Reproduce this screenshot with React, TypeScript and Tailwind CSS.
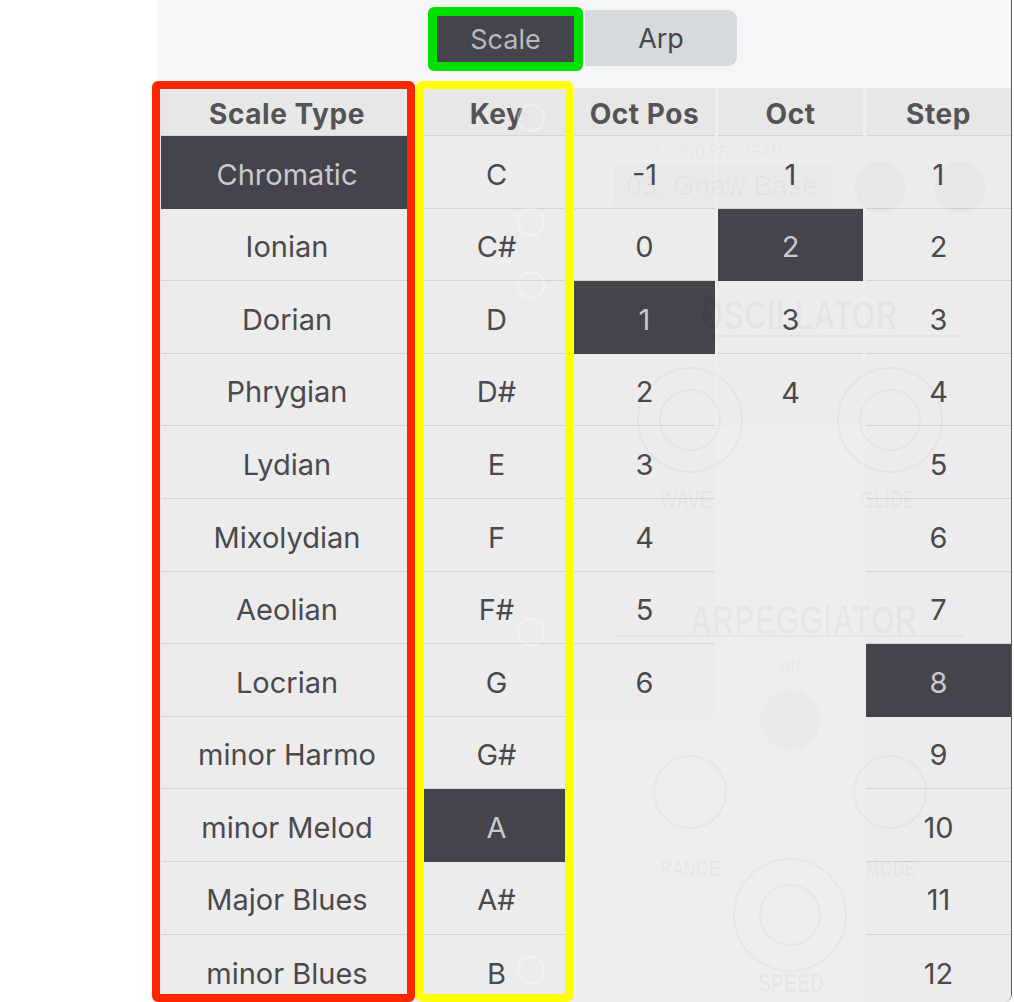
import React from "react";

type ColProps = {
  width: string;
  header: string;
  items: string[];
  selected: number;
  shift?: string;
};

function Column({ width, header, items, selected, shift = "" }: ColProps) {
  return (
    <div className={`${width} flex flex-col shrink-0`}>
      <div className={`h-[48px] bg-[#e7e7e7] border-b border-[#d4d4d4] flex items-center justify-center pt-[5px] text-[28px] font-bold text-[#545457] tracking-[0.02em] ${shift}`}>
        {header}
      </div>
      {items.map((it, i) => {
        const sel = i === selected;
        const last = i === items.length - 1;
        return (
          <div
            key={it + i}
            className={`h-[72.6px] flex items-center justify-center pt-[5px] text-[29px] ${shift} ${
              sel
                ? "bg-[#44444c] text-[#c9c9ce]"
                : "bg-[#ececec] text-[#4a4a4e]"
            } ${last ? "" : sel ? "border-b border-[#44444c]" : "border-b border-[#d3d3d3]"}`}
          >
            {it}
          </div>
        );
      })}
    </div>
  );
}

function Ghost() {
  return (
    <div className="absolute left-0 top-0 w-[1014px] h-[1002px] pointer-events-none text-black/[0.03] font-[family-name:'Liberation_Sans',sans-serif]">
      <div className="absolute left-[653px] top-[140px] text-[16px] text-black/[0.035] scale-x-90 origin-left">SOUND PROGRAM</div>
      <div className="absolute left-[614px] top-[165px] w-[218px] h-[42px] bg-black/[0.012] pl-[12px] text-[28px] leading-[42px] text-black/[0.03]">
        03. Gnaw Base
      </div>
      <div className="absolute left-[700px] top-[285px] text-[40px] font-bold tracking-[0.02em] scale-x-75 origin-left">OSCILLATOR</div>
      <div className="absolute left-[690px] top-[590px] text-[40px] font-bold tracking-[0.02em] scale-x-75 origin-left">ARPEGGIATOR</div>
      <div className="absolute left-[660px] top-[482px] text-[24px] font-bold scale-x-75 origin-left">WAVE</div>
      <div className="absolute left-[860px] top-[482px] text-[24px] font-bold scale-x-75 origin-left">GLIDE</div>
      <div className="absolute left-[780px] top-[654px] text-[18px] font-bold scale-x-75 origin-left">ON</div>
      <div className="absolute left-[660px] top-[852px] text-[22px] font-bold scale-x-75 origin-left">RANGE</div>
      <div className="absolute left-[866px] top-[852px] text-[22px] font-bold scale-x-75 origin-left">MODE</div>
      <div className="absolute left-[758px] top-[964px] text-[26px] font-bold scale-x-75 origin-left">SPEED</div>
      <svg className="absolute left-0 top-0" width="1014" height="1002" viewBox="0 0 1014 1002">
        <g fill="none" stroke="rgba(0,0,0,0.03)" strokeWidth="2">
          <line x1="600" y1="336" x2="965" y2="336" />
          <line x1="618" y1="636" x2="965" y2="636" />
          <circle cx="690" cy="420" r="52" />
          <circle cx="690" cy="420" r="30" />
          <circle cx="890" cy="420" r="52" />
          <circle cx="890" cy="420" r="30" />
          <circle cx="690" cy="792" r="36" />
          <circle cx="890" cy="792" r="36" />
          <circle cx="790" cy="915" r="56" />
          <circle cx="790" cy="915" r="30" />
        </g>
        <g fill="rgba(0,0,0,0.018)">
          <circle cx="880" cy="187" r="26" />
          <circle cx="960" cy="187" r="26" />
          <circle cx="790" cy="720" r="30" />
        </g>
        <g fill="none" stroke="rgba(255,255,255,0.35)" strokeWidth="2">
          <circle cx="531" cy="118" r="13" />
          <circle cx="531" cy="222" r="13" />
          <circle cx="531" cy="285" r="13" />
          <circle cx="531" cy="632" r="13" />
          <circle cx="531" cy="970" r="13" />
        </g>
      </svg>
    </div>
  );
}

export default function App() {
  const scaleTypes = [
    "Chromatic",
    "Ionian",
    "Dorian",
    "Phrygian",
    "Lydian",
    "Mixolydian",
    "Aeolian",
    "Locrian",
    "minor Harmo",
    "minor Melod",
    "Major Blues",
    "minor Blues",
  ];
  const keys = ["C", "C#", "D", "D#", "E", "F", "F#", "G", "G#", "A", "A#", "B"];
  const octPos = ["-1", "0", "1", "2", "3", "4", "5", "6"];
  const oct = ["1", "2", "3", "4"];
  const step = ["1", "2", "3", "4", "5", "6", "7", "8", "9", "10", "11", "12"];

  return (
    <div className="relative w-[1014px] h-[1002px] overflow-hidden bg-white flex font-[family-name:Inter,'Liberation_Sans',sans-serif]">
      <div className="w-[158px] shrink-0" />
      <div className="w-[854px] h-[1002px] shrink-0 bg-[#f5f6f8] border-r border-[#5a5a5e] rounded-br-[8px] overflow-hidden flex flex-col">
        <div className="h-[88px] shrink-0 pt-[7px] pl-[270px] flex items-start">
          <div className="w-[155px] h-[64px] border-[9px] border-[#00e000] rounded-[6px] bg-[#44444c] flex items-center justify-center pt-[2px] text-[27px] text-[#b9b9c1]">
            Scale
          </div>
          <div className="ml-[2px] mt-[3px] w-[152px] h-[56px] bg-[#d6d9dd] rounded-r-[9px] flex items-center justify-center pt-[2px] text-[27px] text-[#48484c]">
            Arp
          </div>
        </div>
        <div className="flex-1 bg-[#eeeeee] flex pl-[3px] gap-[3px]">
          <Column width="w-[252px]" header="Scale Type" items={scaleTypes} selected={0} />
          <Column width="w-[155px]" header="Key" items={keys} selected={9} shift="pl-[6px]" />
          <Column width="w-[141px]" header="Oct Pos" items={octPos} selected={2} />
          <Column width="w-[145px]" header="Oct" items={oct} selected={1} />
          <Column width="w-[145px]" header="Step" items={step} selected={7} />
        </div>
      </div>
      <Ghost />
      <div className="absolute left-[152px] top-[81px] w-[263px] h-[921px] border-[8px] border-[#ff2600] rounded-[6px]" />
      <div className="absolute left-[416px] top-[81px] w-[157px] h-[921px] border-[8px] border-[#ffff00] rounded-[6px]" />
    </div>
  );
}
